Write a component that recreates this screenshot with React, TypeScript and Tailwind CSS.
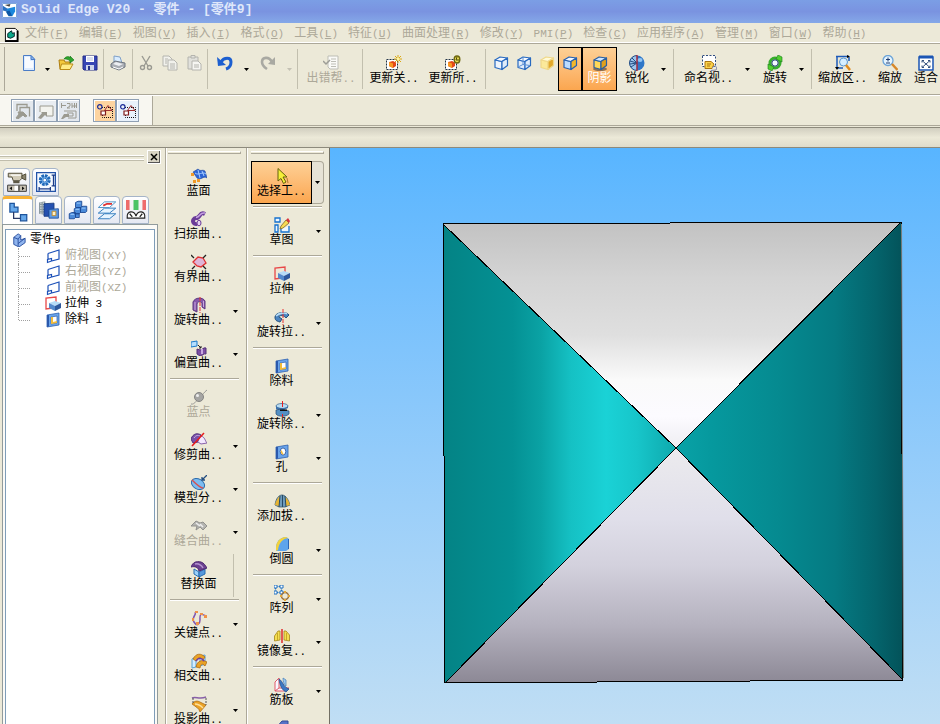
import React from 'react';

interface ToolItem {
  icon?: string;
  label?: string;
  name?: string;
  width?: string;
  kind?: 'sep' | 'arrow';
  disabled?: boolean;
  active?: boolean;
  menu?: boolean;
  edge?: boolean;
}

const menus: [string, string][] = [
  ['文件', 'F'], ['编辑', 'E'], ['视图', 'V'], ['插入', 'I'], ['格式', 'O'],
  ['工具', 'L'], ['特征', 'U'], ['曲面处理', 'R'], ['修改', 'Y'], ['PMI', 'P'],
  ['检查', 'C'], ['应用程序', 'A'], ['管理', 'M'], ['窗口', 'W'], ['帮助', 'H'],
];

const mainTools: ToolItem[] = [
  { icon: 'new', name: '新建', width: 'w-[23px]' },
  { kind: 'arrow', width: 'w-[14px]' },
  { icon: 'open', name: '打开', width: 'w-6' },
  { icon: 'save', name: '保存', width: 'w-6' },
  { kind: 'sep', width: 'w-[3px]' },
  { icon: 'print', name: '打印', width: 'w-[26px]' },
  { kind: 'sep', width: 'w-[3px]' },
  { icon: 'cut', name: '剪切', width: 'w-6', disabled: true },
  { icon: 'copy', name: '复制', width: 'w-6', disabled: true },
  { icon: 'paste', name: '粘贴', width: 'w-6', disabled: true },
  { kind: 'sep', width: 'w-[3px]' },
  { icon: 'undo', name: '撤销', width: 'w-8' },
  { kind: 'arrow', width: 'w-[10px]' },
  { icon: 'redo', name: '重做', width: 'w-[34px]', disabled: true },
  { kind: 'arrow', width: 'w-2', disabled: true },
  { kind: 'sep', width: 'w-2' },
  { icon: 'errorHelp', label: '出错帮..', width: 'w-[60px]', disabled: true },
  { kind: 'sep', width: 'w-[3px]' },
  { icon: 'updateLink', label: '更新关..', width: 'w-[60px]' },
  { icon: 'updateAll', label: '更新所..', width: 'w-[58px]' },
  { kind: 'sep', width: 'w-[7px]' },
  { icon: 'wireCube', name: '线框', width: 'w-[23px]' },
  { icon: 'hiddenCube', name: '隐藏边', width: 'w-[23px]' },
  { icon: 'solidCube', name: '着色', width: 'w-[23px]' },
  { icon: 'edgeCube', name: '带边着色', width: 'w-6', active: true },
  { icon: 'shadowCube', label: '阴影', width: 'w-[35px]', active: true },
  { icon: 'sharpen', label: '锐化', width: 'w-10' },
  { kind: 'arrow', width: 'w-3' },
  { kind: 'sep', width: 'w-2' },
  { icon: 'namedView', label: '命名视..', width: 'w-[63px]' },
  { kind: 'arrow', width: 'w-[14px]' },
  { icon: 'rotate', label: '旋转', width: 'w-[42px]' },
  { kind: 'arrow', width: 'w-[11px]' },
  { kind: 'sep', width: 'w-2' },
  { icon: 'zoomArea', label: '缩放区..', width: 'w-[55px]' },
  { icon: 'zoom', label: '缩放', width: 'w-10' },
  { icon: 'fit', label: '适合', width: 'w-8' },
];

const surfaceTools: ToolItem[] = [
  { icon: 'blueSurf', label: '蓝面' },
  { icon: 'sweep', label: '扫掠曲..' },
  { icon: 'bounded', label: '有界曲..' },
  { icon: 'revolveSurf', label: '旋转曲..', menu: true },
  { icon: 'offset', label: '偏置曲..', menu: true },
  { kind: 'sep' },
  { icon: 'blueDot', label: '蓝点', disabled: true },
  { icon: 'trim', label: '修剪曲..', menu: true },
  { icon: 'parting', label: '模型分..', menu: true },
  { icon: 'stitch', label: '缝合曲..', menu: true, disabled: true },
  { icon: 'replace', label: '替换面', edge: true },
  { kind: 'sep' },
  { icon: 'keyCurve', label: '关键点..', menu: true },
  { icon: 'intersect', label: '相交曲..' },
  { icon: 'project', label: '投影曲..', menu: true },
];

const featureTools: ToolItem[] = [
  { icon: 'select', label: '选择工..', menu: true, active: true },
  { kind: 'sep' },
  { icon: 'sketch', label: '草图', menu: true },
  { kind: 'sep' },
  { icon: 'extrude', label: '拉伸' },
  { icon: 'revolve', label: '旋转拉..', menu: true },
  { kind: 'sep' },
  { icon: 'cutout', label: '除料' },
  { icon: 'revCut', label: '旋转除..', menu: true },
  { icon: 'hole', label: '孔', menu: true },
  { kind: 'sep' },
  { icon: 'draft', label: '添加拔..' },
  { icon: 'round', label: '倒圆', menu: true },
  { kind: 'sep' },
  { icon: 'pattern', label: '阵列', menu: true },
  { icon: 'mirror', label: '镜像复..', menu: true },
  { kind: 'sep' },
  { icon: 'rib', label: '筋板', menu: true },
  { icon: 'thin', name: '薄壁' },
];

const treeItems = [
  { icon: 'plane', label: '俯视图', tail: '(XY)', muted: true },
  { icon: 'plane', label: '右视图', tail: '(YZ)', muted: true },
  { icon: 'plane', label: '前视图', tail: '(XZ)', muted: true },
  { icon: 'extrude', label: '拉伸', tail: ' 3', muted: false },
  { icon: 'cutout', label: '除料', tail: ' 1', muted: false },
];

const cube = (front: string, top: string, side: string, stroke: string) => (
  <g stroke={stroke} strokeWidth="1.2" strokeLinejoin="round">
    <path d="M2 5 9 6.500V14.500L2 12.500Z" fill={front} />
    <path d="M2 5 7 2 14.500 3 9 6.500Z" fill={top} />
    <path d="M9 6.500 14.500 3V10.500L9 14.500Z" fill={side} />
  </g>
);

const icons: Record<string, React.ReactNode> = {
  app: (
    <>
      <rect width="16" height="16" fill="#fff" />
      <path d="M.5 .5H15.500V15.500H.5Z" stroke="#6f9bd8" />
      <path d="M1 3 6 6 5 9 1 8Z" fill="#2b6fc0" />
      <path d="M5 6 14 4 14 9 11 14 6 12Z" fill="#1b87dc" />
      <path d="M4 9 8 8 11 14 7 14Z" fill="#0d57a6" />
      <path d="M3 2 9 1 8 4Z" fill="#444" />
    </>
  ),
  doc: (
    <>
      <path d="M1.500 1.500H12L14.500 4V14.500H1.500Z" fill="#fff" stroke="#000" />
      <path d="M14.500 4V15H1" stroke="#000" strokeWidth="2" />
      <path d="M4 7 8 4 9 7 11 6V10L7 12 4 11Z" fill="#0aa88c" stroke="#022" />
    </>
  ),
  new: (
    <>
      <path d="M2.500 .5H10L13.500 4.500V15.500H2.500Z" fill="#dcecff" stroke="#4b7cc6" />
      <path d="M4 2H9V6H12V13H4Z" fill="#f8fbff" />
      <path d="M10 .5V4.500H14Z" fill="#8bb7ef" stroke="#4b7cc6" />
    </>
  ),
  open: (
    <>
      <path d="M1 5H6L7 7H12V14H2Z" fill="#f3c93c" stroke="#ad7d10" />
      <path d="M3.500 9H15L12 14.500H2Z" fill="#ffeb85" stroke="#b98b18" />
      <path d="M6 4C8 1 11 1 12 3V1L16 5 12 8V6C10 4 8 4 6 4Z" fill="#2da52d" stroke="#187018" strokeWidth=".6" />
    </>
  ),
  save: (
    <>
      <path d="M1 1H15V15H2L1 14Z" fill="#3646b4" stroke="#222d88" />
      <path d="M4 1H12V7H4Z" fill="#fff" />
      <path d="M5 3H11M5 5H11" stroke="#b5bfe0" />
      <path d="M4 10H12V15H4Z" fill="#cdd5ea" />
      <path d="M6 11H8V15H6Z" fill="#26348c" />
    </>
  ),
  print: (
    <>
      <path d="M4 7 4 1 10 2 12 8Z" fill="#d9ecff" stroke="#7fa0c8" />
      <path d="M1 9 5 6 15 8V12L9 15 1 12Z" fill="#a9adb4" stroke="#6f7680" />
      <path d="M3 9 6 7 13 9 9 11Z" fill="#eceef2" />
      <path d="M3 12 9 14 13 12" stroke="#fff" />
    </>
  ),
  cut: (
    <g stroke="#9a9a92" strokeWidth="1.400">
      <path d="M4 1 10 11M12 1 6 11" />
      <circle cx="4.500" cy="12.500" r="2" />
      <circle cx="11.500" cy="12.500" r="2" />
    </g>
  ),
  copy: (
    <g fill="#f1f1ec" stroke="#b4b4ae">
      <path d="M1 1H7L10 4V11H1Z" />
      <path d="M3 4H6M3 6H5M3 8H5" />
      <path d="M6 5H12L15 8V15H6Z" />
      <path d="M8 9H13M8 11H13M8 13H13" />
    </g>
  ),
  paste: (
    <g fill="#e1e1dc" stroke="#b4b4ae">
      <path d="M2 2H12V14H2Z" />
      <path d="M5 .5H9V3H5Z" />
      <path d="M6 6H12L15 9V15H6Z" fill="#f6f6f2" />
      <path d="M8 10H13M8 12H13" />
    </g>
  ),
  undo: (
    <>
      <path d="M4 7C7 2 14 2 14 7C14 11 12 13 9 14" stroke="#1c5fd0" strokeWidth="3" />
      <path d="M0 2 1 11 9 10Z" fill="#1c5fd0" />
    </>
  ),
  redo: (
    <>
      <path d="M12 7C9 1 2 2 2 7C2 10 4 12 7 14" stroke="#a9a9a2" strokeWidth="2.600" />
      <path d="M15 2V10L8 9Z" fill="#a9a9a2" />
    </>
  ),
  errorHelp: (
    <>
      <path d="M5 1H15V14H7L5 12Z" fill="#fafaf7" stroke="#bdbdb5" />
      <path d="M8 4H13M8 6.500H13M8 9H13M8 11.500H13" stroke="#bdbdb5" />
      <path d="M0 6 3 9 7 5" stroke="#9d9d96" strokeWidth="1.500" />
    </>
  ),
  updateLink: (
    <>
      <path d="M.5 4.500H11.500V14.500H.5Z" fill="#fff" stroke="#234" strokeDasharray="2 1" />
      <path d="M3 7 7 6 10 7.500V11L7 13 3 11Z" fill="#e34818" />
      <path d="M3 7 7 8.500V13L3 11Z" fill="#f89820" />
      <path d="M12 0V8M8 4H16M9 1 15 7M9 7 15 1" stroke="#dba812" />
      <circle cx="12" cy="4" r="1.500" fill="#fff6a0" />
    </>
  ),
  updateAll: (
    <>
      <path d="M.5 4.500H11.500V14.500H.5Z" fill="#fff" stroke="#234" strokeDasharray="2 1" />
      <path d="M3 7 7 6 10 7.500V11L7 13 3 11Z" fill="#e34818" />
      <path d="M3 7 7 8.500V13L3 11Z" fill="#f89820" />
      <ellipse cx="12" cy="4.500" rx="2.800" ry="3.500" fill="#e8dc50" stroke="#6c650c" strokeWidth="1.400" />
      <path d="M12 2 11 5 14 5" stroke="#4c480c" />
    </>
  ),
  wireCube: cube('#eef4fc', '#f7faff', '#dfecfa', '#286ac0'),
  hiddenCube: (
    <>
      {cube('#e2edfa', '#f7faff', '#dfecfa', '#286ac0')}
      <path d="M2 12 7 9.500 14 10.500M7 2V9.500" stroke="#5c91d4" />
    </>
  ),
  solidCube: cube('#fbe99a', '#fffad8', '#e2a82a', '#f0d888'),
  edgeCube: cube('#bcdcff', '#f3f8ff', '#f2b72c', '#2560b0'),
  shadowCube: (
    <>
      <ellipse cx="8" cy="14" rx="7" ry="2" fill="#8f7050" />
      {cube('#ffd857', '#cfe6ff', '#e0a01c', '#2a5fa0')}
    </>
  ),
  sharpen: (
    <>
      <circle cx="8" cy="8" r="7.500" fill="#2f77c8" />
      <path d="M8 .5A7.500 7.500 0 0 0 8 15.500Z" fill="#9cc6ee" stroke="#244e84" />
      <path d="M1 6 8 8 2 12M3 3 8 8 1 9" stroke="#244e84" />
      <ellipse cx="11" cy="5" rx="2.500" ry="2" fill="#90c4f4" />
      <path d="M8 0V16" stroke="#e21818" />
    </>
  ),
  namedView: (
    <>
      <path d="M1.500 .5H14.500V11.500H1.500Z" fill="#fff" stroke="#2e4c80" strokeDasharray="2 1.500" />
      <path d="M4 6.500H10L13 9 11 13.500H4Z" fill="#fbd24a" stroke="#aa7410" />
      <path d="M6 9H10M6 11H9" stroke="#aa7410" />
      <path d="M11 13C14 9 17 12 15 15L10 15.500" stroke="#8088a8" />
    </>
  ),
  rotate: (
    <>
      <circle cx="8" cy="8" r="5" stroke="#36ad2c" strokeWidth="3" />
      <circle cx="8" cy="8" r="3.200" fill="#f2f8ff" stroke="#183c68" />
      <path d="M11 0 15 2 15 7 9 4ZM1 9 7 12 5 16 1 14Z" fill="#52cf2f" stroke="#16781a" strokeWidth=".6" />
    </>
  ),
  zoomArea: (
    <>
      <path d="M2 1V13M1 1.500H14M14 2V6M2 13H8" stroke="#1c5ab8" strokeWidth="1.500" />
      <path d="M0 12H4L2 15ZM12 0V3L15 1.500Z" fill="#000" />
      <circle cx="8.500" cy="7" r="4" fill="#d6eeff" stroke="#5695d4" />
      <path d="M11 10 15 15" stroke="#e08a1c" strokeWidth="2.500" />
    </>
  ),
  zoom: (
    <>
      <circle cx="6" cy="5.500" r="5" fill="#e6f5ff" stroke="#6ca4d8" strokeWidth="1.300" />
      <path d="M4 4.500H8M6 2.500V6.500M4 8H8" stroke="#203c70" />
      <path d="M10 9 15.500 15" stroke="#d7882a" strokeWidth="2.500" />
    </>
  ),
  fit: (
    <>
      <path d="M1 2H15V15H1Z" fill="#fff" stroke="#1b55b4" strokeWidth="1.500" />
      <path d="M1 2H15" stroke="#1b55b4" strokeWidth="3" />
      <path d="M4 5.500H6M4 5.500V7.500M4 5.500 12 12.500M12 5.500H10M12 5.500V7.500M12 5.500 4 12.500M4 12.500V10.500M4 12.500H6M12 12.500V10.500M12 12.500H10" stroke="#35507c" />
    </>
  ),
  blueSurf: (
    <>
      <path d="M2 4 7 1C10 4 11 1 14 3L16 10C13 7 10 13 6 10Z" fill="#2c64d4" stroke="#1c46a0" strokeWidth=".6" />
      <path d="M7 2 9 10M11 3 13 8M4 5C8 8 11 3 15 6" stroke="#a6ccff" />
      <path d="M0 5H3V8H0ZM2 12H5V15H2ZM6 11H9V14H6Z" fill="#f09a28" />
    </>
  ),
  sweep: (
    <>
      <path d="M14 3C8 0 10 7 5 7C0 8 2 14 6 13" stroke="#6a3c98" strokeWidth="4" />
      <path d="M14 2C8 1 10 6 5 6.500" stroke="#c4a0e0" strokeWidth="1.500" />
      <ellipse cx="8" cy="12" rx="2" ry="2.800" fill="#e4d0f2" stroke="#6a3c98" />
    </>
  ),
  bounded: (
    <>
      <path d="M2 8 7 3 12 4 15 9 10 13 6 12Z" fill="#deb6d8" stroke="#e03030" strokeWidth="1.300" />
      <path d="M0 1 3 4M15 1 12 4M1 15 4 12M15 15 12 12" stroke="#222" strokeWidth="1.300" />
    </>
  ),
  revolveSurf: (
    <>
      <path d="M2 5C4 0 12 0 14 4V12L11 10V6C9 4 7 4 6 7V15L2 13Z" fill="#8758ac" stroke="#5c3880" />
      <path d="M4 5V13M12.500 4V10" stroke="#caaadf" />
      <path d="M9 0V16" stroke="#e83030" strokeDasharray="4 1" />
    </>
  ),
  offset: (
    <>
      <path d="M0 2 6 1V6L0 7Z" fill="#b4dfff" stroke="#1878c8" />
      <path d="M7 5 10 8M10 6V8H8" stroke="#222" />
      <path d="M6 9 9 10C12 10 12 7 15 8V14C12 13 12 16 9 16L6 14Z" fill="#7b4fa4" stroke="#533078" />
      <path d="M11 9V14" stroke="#c8a8e0" strokeWidth="2" />
    </>
  ),
  blueDot: (
    <>
      <path d="M0 15C4 16 6 10 9 8S13 3 16 1" stroke="#9c9c98" />
      <circle cx="8" cy="8" r="4.500" fill="#a5a5a3" stroke="#858583" />
      <circle cx="6.500" cy="6.500" r="1.500" fill="#eee" />
    </>
  ),
  trim: (
    <>
      <path d="M0 7C2 1 7 1 10 3L7 10 2 11Z" fill="#7950a8" stroke="#50307c" />
      <path d="M3 6C5 3 7 3 9 4" stroke="#c8b0e4" />
      <path d="M10 4C14 5 14 9 16 11L10 12 7 10" fill="#f3e8ff" stroke="#8660a8" />
      <path d="M1 14 13 1" stroke="#e81c1c" strokeWidth="1.500" />
    </>
  ),
  parting: (
    <>
      <ellipse cx="7" cy="9" rx="7" ry="5" fill="#7cbcf0" stroke="#2c6cac" transform="rotate(30 7 9)" />
      <path d="M1 5C4 8 9 13 12 13" stroke="#d85050" strokeWidth="1.400" />
      <path d="M16 0 11 5M11 2V5H14" stroke="#244e80" strokeWidth="1.300" />
    </>
  ),
  stitch: (
    <>
      <path d="M0 8 5 3 9 5 12 4 16 8 12 12 9 9 5 12 6 8Z" fill="#b4b4b0" stroke="#92928e" />
      <path d="M5 5 9 8M9 6 12 9" stroke="#eee" strokeWidth="1.500" />
    </>
  ),
  replace: (
    <>
      <path d="M3 8 8 11V16L3 13Z" fill="#9cd0fa" stroke="#276cb0" />
      <path d="M8 11 14 8V13L8 16Z" fill="#5698dc" stroke="#276cb0" />
      <path d="M0 6C2 1 5 0 10 1C13 2 14 4 16 7L8 10C7 6 4 5 0 6Z" fill="#6c4090" stroke="#4c2870" />
      <path d="M4 3C8 2 11 5 12 7" stroke="#b494d0" strokeWidth="1.500" />
    </>
  ),
  keyCurve: (
    <>
      <path d="M4 2C6 5 0 7 3 12S9 14 9 10 8 2 15 6" stroke="#8054b0" strokeWidth="1.500" />
      <path d="M4 1H7V3H4ZM1 8H3V11H1ZM5 12H8V15H5ZM9 3H12V5H9ZM13 5H16V8H13Z" fill="#f09248" />
    </>
  ),
  intersect: (
    <>
      <path d="M1 6 5 4V14L1 15ZM9 3 14 2V11L9 13Z" fill="#d4edff" stroke="#58a0d4" />
      <path d="M2 6C5 0 10 0 14 4L12 7C9 4 7 4 5 8ZM5 14C6 8 11 6 16 9L14 13C11 10 10 11 9 15Z" fill="#eaa226" stroke="#a4620c" strokeWidth=".7" />
      <path d="M5 8C8 4 11 5 13 8" stroke="#713ba0" strokeWidth="1.500" />
    </>
  ),
  project: (
    <>
      <path d="M1 2C5 0 8 4 15 1" stroke="#8860a8" strokeWidth="1.500" />
      <path d="M1 8C4 4 7 5 9 6L15 9 9 16C8 12 5 11 1 8Z" fill="#eaa226" stroke="#a4620c" strokeWidth=".7" />
      <path d="M2 2V7M15 2V9" stroke="#555" strokeDasharray="2 1" />
      <path d="M4 8C8 8 10 10 12 12" stroke="#ffe09a" strokeWidth="1.500" />
    </>
  ),
  select: (
    <>
      <path d="M4 .5 13 9H9L12 14 9.500 15.500 7 10.500 4 13Z" fill="#f4ef38" stroke="#65600c" />
      <path d="M13 10 14 15" stroke="#b07830" />
    </>
  ),
  sketch: (
    <>
      <path d="M1 1H6V5H1ZM1 8H4V15H1ZM7 12V15H15V9" fill="#eef7ff" stroke="#1672ce" strokeWidth="1.300" />
      <path d="M6 12 7 9 12 3 15 6 9 11Z" fill="#f8da54" stroke="#6c561c" strokeWidth=".7" />
      <path d="M12 3 14 1 16 4 15 6Z" fill="#d8343c" />
    </>
  ),
  extrude: (
    <>
      <path d="M8 12 1 13V2L11 1V6" stroke="#e84848" strokeWidth="1.300" />
      <path d="M4 7 10 5 16 7 10 10Z" fill="#b7dcf8" />
      <path d="M4 7 10 10V15L4 12Z" fill="#5489cc" />
      <path d="M10 10 16 7V12L10 15Z" fill="#2e589c" />
    </>
  ),
  revolve: (
    <>
      <path d="M1 8C1 3 13 2 15 6L12 9C10 6 5 6 5 8L8 10 6 13C2 12 1 11 1 8Z" fill="#4a84c0" stroke="#24507c" />
      <path d="M2 7C5 4 11 3 13 5" stroke="#b8dcf4" strokeWidth="1.600" />
      <path d="M9 0V16" stroke="#e83030" strokeDasharray="4 1" />
    </>
  ),
  cutout: (
    <>
      <path d="M2 3 14 1V13L2 15Z" fill="#6aa4ea" stroke="#2c60b0" strokeWidth=".8" />
      <path d="M2 3 4 3V14.500L2 15Z" fill="#2a58ac" />
      <path d="M6 5 12 4V11L6 12Z" fill="#fff" stroke="#3a68b0" strokeWidth=".8" />
      <path d="M6 5 8 5V10L12 9V11L6 12Z" fill="#f3bc3a" />
    </>
  ),
  revCut: (
    <>
      <ellipse cx="8" cy="5" rx="6" ry="2.500" fill="#b8dcf2" stroke="#305c88" strokeWidth=".7" />
      <path d="M2 5V8L7 10 14 7V5C12 8 5 8 2 5Z" fill="#3b70ac" />
      <path d="M2 9 7 8 15 10V13C12 16 4 16 2 13Z" fill="#5490c4" stroke="#284c74" strokeWidth=".7" />
      <path d="M6 8.500H13V10H6Z" fill="#111" />
      <path d="M8.500 0V6M8.500 13V16" stroke="#e82020" />
    </>
  ),
  hole: (
    <>
      <path d="M2 3 14 1V13L2 15Z" fill="#6aa4ea" stroke="#2c60b0" strokeWidth=".8" />
      <path d="M2 3 4 3V14.500L2 15Z" fill="#2a58ac" />
      <ellipse cx="9" cy="7.500" rx="2.800" ry="3.500" fill="#fff" stroke="#1f4b98" strokeWidth=".8" />
      <path d="M7 6C9 7 8 9 10 10.500C8 11 6 9 7 6Z" fill="#f3bc3a" />
    </>
  ),
  draft: (
    <>
      <path d="M1 12C2 5 5 2 8 2S14 5 16 12L11 14 5 14Z" fill="#6e9cbc" stroke="#3c5c70" strokeWidth=".8" />
      <path d="M1 12C2 8 4 4 6 3L5 13ZM11 4 12 13 16 12C15 8 13 5 11 4Z" fill="#e7b534" />
      <path d="M6 3 5 14M8.500 2V14M11 3 12 14" stroke="#264a64" />
    </>
  ),
  round: (
    <>
      <path d="M2 15V12C2 6 6 1 12 1L15 3V13L12 15Z" fill="#5ea4ec" />
      <path d="M2 15V12C2 6 6 1 12 1L14 2C8 3 5 7 4 14Z" fill="#f3d23c" />
      <path d="M14.500 3V13" stroke="#2b66b8" />
    </>
  ),
  pattern: (
    <>
      <path d="M1.500 1.500H7.500V7.500H1.500Z" stroke="#2878c8" strokeDasharray="2 1" />
      <path d="M0 0H3V3H0ZM6 0H9V3H6ZM0 6H3V9H0ZM6 6H9V9H6Z" fill="#fff" stroke="#2070c0" />
      <circle cx="11" cy="11" r="3.500" stroke="#987040" strokeWidth="1.500" />
      <path d="M10 6H12V8H10ZM6 10H8V12H6ZM14 10H16V12H14ZM10 14H12V16H10Z" fill="#e6a838" />
    </>
  ),
  mirror: (
    <>
      <path d="M.5 13V8L4 3 6 3V12ZM10 12V3H12L15.500 7V13Z" fill="#f3de50" stroke="#a48418" strokeWidth=".8" />
      <path d="M3.500 5V12M12.500 5V12" stroke="#c8a828" />
      <path d="M8 1V15" stroke="#e02828" strokeWidth="1.500" />
    </>
  ),
  rib: (
    <>
      <path d="M1 5 5 1V11L1 14ZM1 14H10L15 11H5" fill="#f7f7ff" stroke="#e05868" />
      <path d="M5 2C9 4 9 10 15 12L12 15C8 13 6 9 5 2Z" fill="#3c78c4" stroke="#28508c" strokeWidth=".8" />
      <path d="M9 1 12 3V9C10 7 9 5 9 1Z" fill="#9ccaf2" stroke="#5287bc" strokeWidth=".8" />
    </>
  ),
  thin: <path d="M1 9 8 1H14V14H1Z" fill="#5872c8" stroke="#334a98" />,
  part: (
    <>
      <path d="M2 5 7 1 10 3V8L15 6V11L8 16 2 13Z" fill="#8fb4ee" stroke="#234a9c" />
      <path d="M7 7V15M2 5 7 7 10 3M7 12 15 6" stroke="#234a9c" />
    </>
  ),
  plane: (
    <path d="M3 5.500 14 2V11L6.500 13V10.500L2.500 11.500V14.500L6.500 13M3 5.500V11.500" fill="#fff" stroke="#1c50b8" strokeWidth="1.200" />
  ),
  tabCamera: (
    <>
      <path d="M1 1H12V5L10 7H5L4 4H1Z" fill="#d2cbb8" stroke="#55503c" strokeWidth=".8" />
      <path d="M12 3 15 1.500V6.500L12 5Z" fill="#8c8670" stroke="#55503c" strokeWidth=".8" />
      <path d="M3 2.500H11" stroke="#fff" />
      <path d="M5 7H10V9H5Z" fill="#5c5746" />
      <path d="M.5 10.500H15.500V15.500H.5Z" fill="#c8c2b4" stroke="#444" strokeWidth=".8" />
      <path d="M4 11.500V14.500L2 13ZM12 11.500V14.500L14 13ZM9 11H10V15H9Z" fill="#111" />
      <path d="M6 11H9V15H6Z" fill="#fff" />
    </>
  ),
  tabGear: (
    <>
      <path d="M.5 .5H15.500V15.500H.5Z" fill="#f6faff" stroke="#2454a8" />
      <circle cx="7" cy="6.500" r="3.500" fill="#8cc2f4" stroke="#2068b8" strokeWidth="2.500" strokeDasharray="2 .7" />
      <circle cx="7" cy="6.500" r="1.500" fill="#fff" stroke="#2068b8" strokeWidth=".7" />
      <path d="M2 13.500H12M14 2V11M12.500 2.500H15.500M12.500 11H15.500M2.500 12V15M11.500 12V15" stroke="#1c3c88" />
    </>
  ),
  tabTree: (
    <>
      <path d="M1.500 1H5V4H8V8H1.500Z" fill="#66a8ea" stroke="#1e549c" />
      <path d="M10 10H15V15H10Z" fill="#66a8ea" stroke="#1e549c" />
      <path d="M4.500 8V13H10" stroke="#2a3a66" />
    </>
  ),
  tabFamily: (
    <>
      <path d="M0 2 5 1V12L0 11Z" fill="#8c9aa0" />
      <path d="M1.500 2V11M3.500 2V11" stroke="#dce4e8" strokeDasharray="1 1" />
      <path d="M4 3 12 2.500V9H8V13H4Z" fill="#2450b0" stroke="#183c80" strokeWidth=".7" />
      <path d="M8 7.500 15.500 7V14.500H8Z" fill="#5d9ae6" stroke="#20509c" strokeWidth=".7" />
      <path d="M10.500 9H13.500V12.500H10.500Z" fill="#fff1c8" stroke="#c08820" strokeWidth=".7" />
    </>
  ),
  tabBlocks: (
    <g fill="#4a8ada" stroke="#1b4892" strokeWidth=".7">
      <path d="M6 2 8 1H11V5L10 6H6ZM10 6 12 5H15V9L14 10H10ZM5 7 7 6H10V10L9 11H5ZM1 11 3 10H6V14L5 15H1ZM6 11H9V14H6Z" />
      <path d="M7 2.500H10M11 6.500H14M2 11.500H5M6 7.500H9" stroke="#a4d0ff" />
    </g>
  ),
  tabLayers: (
    <g strokeWidth=".8">
      <path d="M1 15 6 11H15L10 15ZM1 10.500 6 6.500H15L10 10.500Z" fill="#e6f4ff" stroke="#3880c0" />
      <path d="M1 6 6 1.500H15L10 6Z" fill="#fff" stroke="#5898c8" />
      <path d="M5 4.500 8 3H12" stroke="#e03030" strokeWidth="1.400" />
    </g>
  ),
  tabGauge: (
    <>
      <path d="M0 0H3V8H0ZM13 0H16V8H13Z" fill="#ee6c6c" />
      <path d="M3 0H13V8H3Z" fill="#f4f4f4" />
      <path d="M6 0H10V8H6Z" fill="#4cc464" />
      <path d="M1 14.500C0 8 7 8 8 13C9 8 16 8 15 14.500Z" fill="#fff" stroke="#222" />
      <path d="M3 11 5 13.500M13 11 11 13.500" stroke="#222" />
    </>
  ),
  viewCopy: (
    <>
      <path d="M2 8V1.500H12V4M5 9V4.500H14.500V13.500" stroke="#9b9a90" strokeWidth="1.300" />
      <path d="M1 15 4 11 3 9H8L12 13 10 14 8 12 3 16Z" fill="#9b9a90" stroke="#9b9a90" />
    </>
  ),
  viewSingle: (
    <>
      <path d="M2 9V3H15V13H9" fill="#f3f3ee" stroke="#9b9a90" />
      <path d="M0 15 4 10 3 9H9V14L7 12 3 16Z" fill="#9b9a90" />
    </>
  ),
  viewDim: (
    <>
      <path d="M.5 0V5M.5 2.500H5M6 .5H9V3L6 5H9M11 0V5M13.500 0V5M15.500 0V5M11 3H16" stroke="#9b9a90" />
      <path d="M3 8H15V15H7M6 10H12V13H8" stroke="#9b9a90" />
      <path d="M0 16 3 11H8V14H5L2 16Z" fill="#9b9a90" />
    </>
  ),
  shapes: (
    <>
      <path d="M5 4.500H15.500V14.500H5.500V10" stroke="#111" strokeDasharray="1 1" />
      <circle cx="2.800" cy="3.800" r="2.200" stroke="#1c2c98" strokeWidth="1.200" />
      <path d="M7.500 7.500 11 2.500 15 7.500Z" stroke="#a03030" />
      <path d="M4 8H8.500V12H4Z" fill="#fff" stroke="#801c1c" strokeWidth="1.200" />
    </>
  ),
};

const Icon: React.FC<{ name: string; className?: string }> = ({ name, className = 'h-4 w-4' }) => (
  <svg viewBox="0 0 16 16" fill="none" aria-hidden="true" className={`shrink-0 ${className}`}>
    {icons[name]}
  </svg>
);

const Caret: React.FC<{ muted?: boolean }> = ({ muted }) => (
  <svg viewBox="0 0 5 3" aria-hidden="true" className="h-[3px] w-[5px]">
    <path d="M0 0H5L2.500 3Z" fill={muted ? '#c4c1b4' : '#000'} />
  </svg>
);

// Latin characters are set a little smaller so they stay half the width of the Chinese ones
const Label: React.FC<{ text: string }> = ({ text }) => {
  const match = text.match(/^([^\x00-\x7f]*)([\x00-\x7f]*)$/);
  if (!match) return <>{text}</>;
  return (
    <>
      {match[1]}
      {match[2] && <span className="text-[11px]">{match[2]}</span>}
    </>
  );
};

const MainToolbar = () => (
  <div role="toolbar" className="flex h-[51px] shrink-0 items-stretch overflow-hidden border-b border-[#aca899] bg-[#ece9d8] py-[3px]">
    <div className="mr-3 w-[5px] shrink-0 border-r border-[#aca899]" />
    {mainTools.map((tool, i) => {
      if (tool.kind === 'sep') {
        return (
          <div key={i} className={`flex shrink-0 justify-center py-[2px] ${tool.width}`}>
            <div className="w-px bg-[#c2bfae]" />
          </div>
        );
      }
      if (tool.kind === 'arrow') {
        return (
          <button key={i} aria-label="更多" disabled={tool.disabled} className={`flex shrink-0 items-center justify-center ${tool.width}`}>
            <Caret muted={tool.disabled} />
          </button>
        );
      }
      const tone = tool.active
        ? 'border border-black bg-linear-to-b from-[#fdd095] to-[#fba64f] text-white'
        : tool.disabled ? 'border border-transparent text-[#aca899]' : 'border border-transparent';
      return (
        <button
          key={i}
          aria-label={tool.label || tool.name}
          disabled={tool.disabled}
          className={`flex shrink-0 flex-col items-center pt-[7px] text-xs leading-4 whitespace-nowrap ${tone} ${tool.width}`}
        >
          <Icon name={tool.icon!} />
          {tool.label && <span><Label text={tool.label} /></span>}
        </button>
      );
    })}
  </div>
);

const SideToolbar: React.FC<{ items: ToolItem[]; className: string }> = ({ items, className }) => (
  <div role="toolbar" className={`flex shrink-0 flex-col overflow-hidden border-l border-[#aca899] shadow-[inset_1px_0_0_#fff] ${className}`}>
    <div className="mt-[3px] mb-[7px] h-[3px] shrink-0 border-t border-r border-b border-[#aca899] border-t-white" />
    {items.map((tool, i) => {
      if (tool.kind === 'sep') {
        return (
          <div key={i} className="h-[6px] shrink-0 px-[2px] pt-[2px]">
            <div className="border-t border-b border-t-[#aca899] border-b-white" />
          </div>
        );
      }
      return (
        <div key={i} className="flex h-[43px] shrink-0">
          <button
            aria-label={tool.label || tool.name}
            disabled={tool.disabled}
            className={`flex w-[61px] flex-col items-center pt-[6px] text-xs leading-4 whitespace-nowrap ${
              tool.active ? 'border border-black bg-linear-to-b from-[#fdd095] to-[#fba64f]' : 'border border-transparent'
            } ${tool.disabled ? 'text-[#aca899]' : ''}`}
          >
            <Icon name={tool.icon!} />
            {tool.label && <span><Label text={tool.label} /></span>}
          </button>
          {tool.menu && (
            <button
              aria-label={`${tool.label} 更多`}
              className={`flex w-3 items-center justify-center ${tool.active ? 'rounded-r-sm border border-l-0 border-[#aca899] bg-[#e6e3d6]' : ''}`}
            >
              <Caret />
            </button>
          )}
          {tool.edge && <div className="ml-1 w-px bg-[#c2bfae]" />}
        </div>
      );
    })}
  </div>
);

const tabClass = 'flex w-[27px] items-center justify-center rounded-t-sm border border-[#a5b4c8] bg-linear-to-b from-white to-[#e5e8f2]';

const PathFinder = () => (
  <aside className="flex w-[165px] shrink-0 flex-col">
    <div className="flex h-5 shrink-0 items-start gap-1 pt-[3px] pr-[5px]">
      <div className="mt-1 flex flex-1 flex-col gap-[2px]">
        <div className="h-[2px] border-b border-[#c0bdac] bg-white" />
        <div className="h-[2px] border-b border-[#c0bdac] bg-white" />
      </div>
      <button aria-label="关闭" className="flex h-3 w-3 items-center justify-center border-r border-b border-[#555] bg-[#d8d4c4] shadow-[0_0_0_1px_#fff]">
        <svg viewBox="0 0 8 8" className="h-2 w-2"><path d="M1 1 7 7M7 1 1 7" stroke="#000" strokeWidth="1.500" /></svg>
      </button>
    </div>
    <div className="flex h-7 shrink-0 gap-[2px] pl-[3px]">
      <button aria-label="特征回放" className={tabClass}><Icon name="tabCamera" className="h-5 w-5" /></button>
      <button aria-label="传感器" className={tabClass}><Icon name="tabGear" className="h-5 w-5" /></button>
    </div>
    <div role="tablist" className="flex h-7 shrink-0 gap-[2px] pl-[2px]">
      <button role="tab" aria-selected="true" aria-label="路径查找器" className="flex w-[31px] items-center justify-center rounded-t-sm border border-t-[3px] border-b-0 border-[#a5b4c8] border-t-[#f9b233] bg-white">
        <Icon name="tabTree" className="h-5 w-5" />
      </button>
      <button role="tab" aria-label="零件族" className={tabClass}><Icon name="tabFamily" className="h-5 w-5" /></button>
      <button role="tab" aria-label="特征库" className={tabClass}><Icon name="tabBlocks" className="h-5 w-5" /></button>
      <button role="tab" aria-label="图层" className={tabClass}><Icon name="tabLayers" className="h-5 w-5" /></button>
      <button role="tab" aria-label="仪表" className={tabClass}><Icon name="tabGauge" className="h-5 w-5" /></button>
    </div>
    <div className="mr-[7px] ml-[2px] flex min-h-0 flex-1 border border-b-0 border-[#919b9c] bg-[#fbfaf6] px-[2px] pt-1">
      <div className="flex-1 border border-b-0 border-[#7f9db9] bg-white pt-[2px] text-xs leading-4">
        <div className="flex h-4 items-center gap-1 pl-[6px]">
          <Icon name="part" className="h-[14px] w-[14px]" />
          <span><Label text="零件9" /></span>
        </div>
        <ul className="pl-3">
          {treeItems.map((item, i) => (
            <li key={item.label} className="flex h-4 items-center">
              <div className={`w-px self-start border-l border-dotted border-[#a0a0a0] ${i === treeItems.length - 1 ? 'h-2' : 'h-4'}`} />
              <div className="w-[11px] border-t border-dotted border-[#a0a0a0]" />
              <Icon name={item.icon} className="ml-[15px] h-4 w-4" />
              <span className={`ml-1 whitespace-pre ${item.muted ? 'text-[#aca899]' : ''}`}>
                <Label text={item.label + item.tail} />
              </span>
            </li>
          ))}
        </ul>
      </div>
    </div>
  </aside>
);

const Model = () => (
  <svg viewBox="0 0 610 576" className="h-full w-full" role="img" aria-label="零件9">
    <defs>
      <linearGradient id="left">
        <stop offset="0" stopColor="#048385" />
        <stop offset=".3" stopColor="#049194" />
        <stop offset=".42" stopColor="#0aa2a4" />
        <stop offset=".55" stopColor="#15c1c4" />
        <stop offset=".7" stopColor="#1ad2d6" />
        <stop offset=".83" stopColor="#17c6ca" />
        <stop offset="1" stopColor="#0ea9ad" />
      </linearGradient>
      <linearGradient id="right">
        <stop offset="0" stopColor="#09a3a7" />
        <stop offset=".15" stopColor="#06999e" />
        <stop offset=".45" stopColor="#058a90" />
        <stop offset=".7" stopColor="#057a82" />
        <stop offset=".88" stopColor="#04646c" />
        <stop offset="1" stopColor="#035259" />
      </linearGradient>
      <linearGradient id="top" x2="0" y2="1">
        <stop offset="0" stopColor="#c2c2c2" />
        <stop offset=".25" stopColor="#d4d4d4" />
        <stop offset=".5" stopColor="#dfdfdf" />
        <stop offset=".7" stopColor="#fafafa" />
        <stop offset=".86" stopColor="#fcfbff" />
        <stop offset="1" stopColor="#eeedf2" />
      </linearGradient>
      <linearGradient id="bottom" x2="0" y2="1">
        <stop offset="0" stopColor="#ecebee" />
        <stop offset=".3" stopColor="#e0dfea" />
        <stop offset=".5" stopColor="#d3d1dd" />
        <stop offset=".75" stopColor="#b5b2bf" />
        <stop offset="1" stopColor="#8c8895" />
      </linearGradient>
    </defs>
    <g stroke="#000" strokeWidth="1" strokeLinejoin="round" shapeRendering="crispEdges">
      <path d="M113 76 571 74 346 300Z" fill="url(#top)" />
      <path d="M115 535 573 532 346 300Z" fill="url(#bottom)" />
      <path d="M113 76 115 535 346 300Z" fill="url(#left)" />
      <path d="M571 74 573 532 346 300Z" fill="url(#right)" />
    </g>
    <path d="M571.500 76 573.500 530" stroke="#7d8483" />
  </svg>
);

const miniButton = 'flex h-[23px] w-[23px] items-center justify-center border border-[#8fa0b4] shadow-[inset_1px_1px_0_#fff]';

const App: React.FC = () => {
  return (
    <div className="flex h-screen flex-col overflow-hidden bg-[#ece9d8] font-['Liberation_Mono','Noto_Sans_CJK_SC',monospace] text-black">
      <header className="flex h-[23px] shrink-0 items-center gap-1 bg-linear-to-b from-[#7b9ee5] via-[#7a93e0] to-[#85a8e8] pb-[3px] pl-[2px] text-[13px] leading-4 font-bold whitespace-nowrap text-[#dfe7fa]">
        <Icon name="app" className="h-[15px] w-[15px]" />
        <h1>Solid Edge V20 - 零件 - [零件9]</h1>
      </header>

      <nav className="flex h-[21px] shrink-0 items-center gap-[10px] overflow-hidden border-b border-[#aca899] pt-[2px] pl-1 text-xs leading-4 whitespace-nowrap text-[#aca899] shadow-[inset_0_-1px_0_#fff]">
        <Icon name="doc" className="-mr-1 h-[15px] w-[15px]" />
        {menus.map(([text, key]) => (
          <button key={text}>
            <Label text={text} />
            <span className="text-[11px]">(<u>{key}</u>)</span>
          </button>
        ))}
      </nav>

      <MainToolbar />

      <div className="flex h-[31px] shrink-0 border-t border-b border-t-white border-b-[#aca899]">
        <div className="flex items-center border-r border-[#aca899] bg-[#f8f7f1] pr-[13px] pl-[11px]">
          <button aria-label="复制视图" disabled className={`${miniButton} bg-[#e3e8ee]`}><Icon name="viewCopy" /></button>
          <button aria-label="单一视图" disabled className={`${miniButton} bg-[#e9edf2]`}><Icon name="viewSingle" /></button>
          <button aria-label="尺寸" disabled className={`${miniButton} bg-[#e3e8ee]`}><Icon name="viewDim" /></button>
          <button aria-label="内部选择" aria-pressed="true" className={`${miniButton} ml-[13px] bg-[#fdd4a0]`}><Icon name="shapes" /></button>
          <button aria-label="交叉选择" className={`${miniButton} bg-[#e8f1fb]`}><Icon name="shapes" /></button>
        </div>
      </div>
      <div className="mt-px h-5 shrink-0 border-t border-t-[#8d8a7c] bg-linear-to-b from-[#d2cfc0] via-[#ece9d8] to-[#dfdccb]" />

      <main className="flex min-h-0 flex-1 border-t border-[#8d8a7c]">
        <PathFinder />
        <SideToolbar items={surfaceTools} className="w-[81px] pr-[5px] pl-[2px]" />
        <SideToolbar items={featureTools} className="w-[83px] pr-[5px] pl-1" />
        <section className="min-w-0 flex-1 border-l border-[#716f64] bg-linear-to-b from-[#58b5ff] to-[#c0def4]">
          <Model />
        </section>
      </main>
    </div>
  );
};

export default App;
